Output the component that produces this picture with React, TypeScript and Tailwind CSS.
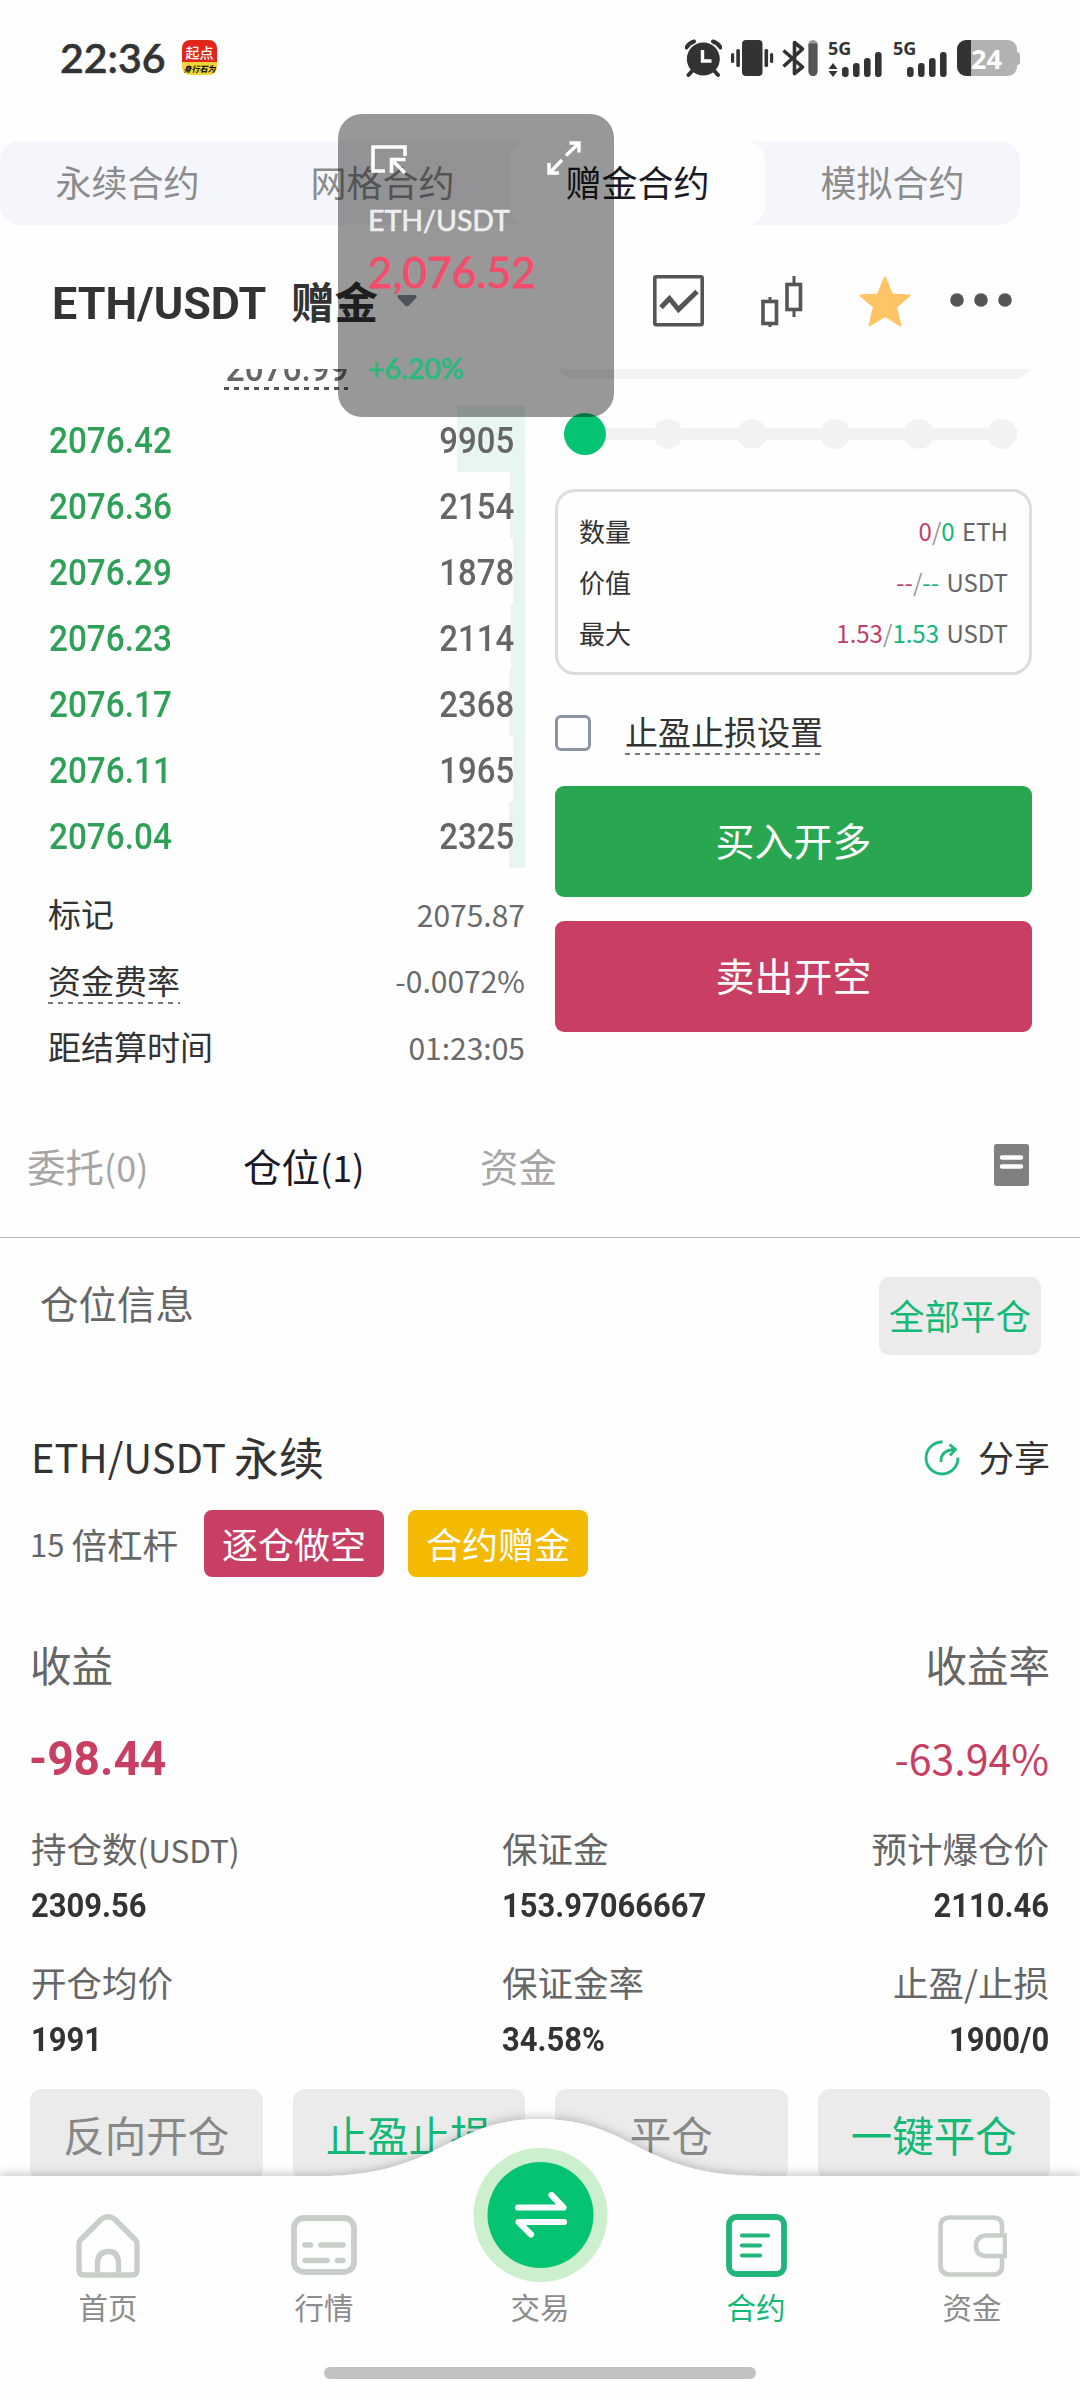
import React from 'react';

const CJK = "font-['Noto_Sans_CJK_SC',sans-serif]";
const DIN = "font-['Roboto','Noto_Sans_CJK_SC',sans-serif]";

const asks = [
  { price: '2076.42', amount: '9905', depth: 68 },
  { price: '2076.36', amount: '2154', depth: 15 },
  { price: '2076.29', amount: '1878', depth: 12 },
  { price: '2076.23', amount: '2114', depth: 14 },
  { price: '2076.17', amount: '2368', depth: 16 },
  { price: '2076.11', amount: '1965', depth: 12 },
  { price: '2076.04', amount: '2325', depth: 16 },
];

function Dashes({ color, thick, width }: { color: string; thick: number; width: number }) {
  return (
    <svg className="block" width={width} height={thick}>
      <line x1="0" y1={thick / 2} x2={width} y2={thick / 2} stroke={color} strokeWidth={thick} strokeDasharray="5 5" />
    </svg>
  );
}

function SignalBars({ data }: { data?: boolean }) {
  return (
    <svg className="overflow-visible" width="60" height="40" viewBox="0 0 60 40" fill="#333">
      <text x="0" y="17" fontSize="18" fontWeight="700" fontFamily="Noto Sans">5G</text>
      {data && <path d="M0.5 31l4.5-6 4.5 6zM0.5 33h9l-4.5 6z" />}
      <rect x="14" y="29" width="6.6" height="10" rx="3" />
      <rect x="25" y="25" width="6.6" height="14" rx="3" />
      <rect x="36" y="20" width="6.6" height="19" rx="3" />
      <rect x="47" y="14" width="6.6" height="25" rx="3" />
    </svg>
  );
}

function StatusBar() {
  return (
    <div className="flex h-[141px] items-start pl-[60px] pt-[38px]">
      <div className="w-[122px] font-['Lato'] text-[41px] font-semibold leading-[39px] text-[#333] [-webkit-text-stroke:0.5px_#333]">22:36</div>
      <div className="mt-[2px] flex h-[35px] w-[35px] flex-col overflow-hidden rounded-[8px]">
        <div className={`${CJK} flex h-[22px] items-center justify-center bg-[#e1261c] pt-px text-[14px] font-medium leading-none text-white`}>起点</div>
        <div className={`${CJK} flex h-[13px] items-center justify-center bg-[#f0d43a] text-[8px] font-bold italic leading-none text-black`}>身行石为</div>
      </div>
      <div className="ml-[468px] flex h-[40px] items-start">
        <svg width="37" height="40" viewBox="0 0 37 40">
          <circle cx="18.300" cy="21" r="16.500" fill="#333" />
          <path d="M1.500 9.500Q4 5 9 3.500M35.500 9.500Q33 5 28 3.500M7.500 32.500l-4 4.500M29 32.500l4 4.500" stroke="#333" strokeWidth="4" fill="none" strokeLinecap="round" />
          <path d="M17.500 12v11h9" stroke="#fff" strokeWidth="3.400" fill="none" />
        </svg>
        <svg className="ml-[9px]" width="43" height="40" viewBox="0 0 43 40" fill="#333">
          <rect x="11" y="2" width="20.500" height="36" rx="4" />
          <rect x="0" y="15" width="3.200" height="10" rx="1.500" />
          <rect x="5.300" y="11" width="3.600" height="18" rx="1.500" />
          <rect x="33.500" y="11" width="3.600" height="18" rx="1.500" />
          <rect x="39" y="15" width="3.200" height="10" rx="1.500" />
        </svg>
        <svg className="ml-[8px]" width="36" height="40" viewBox="0 0 36 40">
          <path d="M1.500 12.500L20.500 29 12.500 35.500V4.500L20.500 11 1.500 28.500" stroke="#333" strokeWidth="3.600" fill="none" strokeLinejoin="round" />
          <rect x="26.500" y="2" width="9" height="36" rx="4.500" fill="#9a9a9a" />
          <path d="M26.500 5.500h9V33.500a4.500 4.500 0 0 1-9 0z" fill="#555" />
        </svg>
        <div className="ml-[10px] h-[40px] w-[65px]"><SignalBars data /></div>
        <div className="h-[40px] w-[64px]"><SignalBars /></div>
        <div className="mt-[2px] flex items-center">
          <div className="flex h-[36px] w-[60px] items-center overflow-hidden rounded-[9px] bg-[linear-gradient(90deg,#333_14px,#b2b2b2_14px)] pl-[14px] font-['Noto_Sans'] text-[27px] font-bold leading-none text-white">24</div>
          <div className="h-[13px] w-[3px] rounded-r-[3px] bg-[#b2b2b2]" />
        </div>
      </div>
    </div>
  );
}

function TopTabs() {
  const tabs = ['永续合约', '网格合约', '赠金合约', '模拟合约'];
  return (
    <div className="flex h-[84px] w-[1020px] rounded-[20px] bg-[#f5f6fb]">
      {tabs.map((t, i) => (
        <div key={t} className={`flex w-[255px] items-center justify-center pb-[4px] text-[36px] leading-none ${i === 2 ? 'rounded-[20px] bg-[#fefefe] text-[#1a1a26]' : 'text-[#8c8c8c]'}`}>{t}</div>
      ))}
    </div>
  );
}

function PairHeader() {
  return (
    <div className="flex h-[144px] items-start pl-[52px]">
      <div className="flex h-[154px] w-[601px] items-center text-[#333]">
        <span className={`${DIN} w-[239px] origin-left scale-x-[1.03] whitespace-nowrap pt-[5px] text-[43.500px] font-bold leading-none`}>ETH/USDT</span>
        <span className="pb-[2px] text-[43.500px] font-bold leading-none">赠金</span>
        <svg className="ml-[19px] mt-[-3px]" width="20" height="12" viewBox="0 0 20 12"><path d="M2 0h16q2.500.5 1 3l-7 7.500q-2 1.500-4 0L1 3Q-.5.5 2 0z" fill="#808a9c" /></svg>
      </div>
      <div className="flex h-[152px] items-center">
        <svg width="51" height="52" viewBox="0 0 51 52" fill="none" stroke="#555">
          <rect x="1.800" y="1.800" width="47.400" height="48" rx="1.500" strokeWidth="3.600" />
          <path d="M8 32.500l8.500-9 9 11L44 16.500" strokeWidth="5" />
        </svg>
        <svg className="ml-[57px]" width="42" height="51" viewBox="0 0 42 51" fill="none" stroke="#555" strokeWidth="3.600">
          <path d="M9 21v4M9 48v3M33 0v8M33 34v7" strokeWidth="3" />
          <rect x="2" y="25.500" width="13.500" height="22" />
          <rect x="26" y="8.500" width="13.500" height="25" />
        </svg>
        <svg className="ml-[56px]" width="52" height="51" viewBox="0 0 52 51"><path d="M26 1.500L33 18.500 50.500 19.500 37 31 41.500 49.500 26 40 10.500 49.500 15 31 1.500 19.500 19 18.500z" fill="#ffc466" stroke="#ffc466" strokeWidth="2" strokeLinejoin="round" /></svg>
        <svg className="ml-[38px]" width="64" height="16" viewBox="0 0 64 16" fill="#555"><circle cx="8" cy="7" r="6.800" /><circle cx="32" cy="7" r="6.800" /><circle cx="56" cy="7" r="6.800" /></svg>
      </div>
    </div>
  );
}

function OrderBook() {
  return (
    <div className="w-[525px]">
      <div className="flex h-[37px] flex-col overflow-hidden pl-[224px]">
        <div className={`${DIN} mt-[-19px] h-[37px] shrink-0 origin-left scale-x-[0.9] pl-[2px] text-[37px] font-medium leading-[37px] text-[#666]`}>2076.99</div>
        <Dashes color="#555" thick={3} width={124} />
      </div>
      {asks.map((a) => (
        <div key={a.price} className="relative flex h-[66px] items-center justify-between pl-[48.500px] pr-[10.500px] pt-[3px]">
          <div className="absolute right-0 top-0 h-[66px] bg-[#e8f6f3]" style={{ width: a.depth }} />
          <span className={`${DIN} relative origin-left scale-x-[0.9] text-[37px] font-medium leading-none text-[#2ea058]`}>{a.price}</span>
          <span className={`${DIN} relative origin-right scale-x-[0.89] text-[37px] font-medium leading-none text-[#666]`}>{a.amount}</span>
        </div>
      ))}
      <div className="flex flex-col pl-[48px] pt-[12.500px]">
        {[['标记', '2075.87'], ['资金费率', '-0.0072%'], ['距结算时间', '01:23:05']].map(([k, v], i) => (
          <div key={k} className="flex h-[66.500px] items-center justify-between">
            <div className="relative text-[33px] leading-none text-[#333]">
              {k}
              {i === 1 && <div className="absolute left-0 top-[38px]"><Dashes color="#777" thick={2} width={132} /></div>}
            </div>
            <span className="text-[30px] leading-none text-[#6a6a6a]">{v}</span>
          </div>
        ))}
      </div>
    </div>
  );
}

function InfoRow({ label, a, b, unit }: { label: string; a: string; b: string; unit: string }) {
  return (
    <div className="flex h-[51px] items-center justify-between leading-none">
      <span className="text-[26px] text-[#333]">{label}</span>
      <span className="text-[24px] text-[#666]"><span className="text-[#c03f68]">{a}</span><span className="text-[#999]">/</span><span className="mr-[2px] text-[#14b877]">{b}</span> {unit}</span>
    </div>
  );
}

function TradeForm() {
  return (
    <div className="ml-[30px] w-[477px]">
      <div className="h-[10px] overflow-hidden"><div className="mt-[-60px] h-[70px] rounded-[20px] bg-[#f2f2f2]" /></div>
      <div className="mt-[34px] flex h-[42px] items-center pl-[9px]">
        <div className="flex h-[12px] w-[453px] items-center justify-between bg-[#f2f2f2]">
          <div className="-mr-[6px] h-[42px] w-[42px] shrink-0 rounded-full bg-[#04c372]" />
          {[0, 1, 2, 3, 4].map((i) => <div key={i} className="h-[30px] w-[30px] shrink-0 rounded-full bg-[#f2f2f2]" />)}
        </div>
      </div>
      <div className="mt-[34px] h-[186px] rounded-[20px] border-[3px] border-[#ddd] px-[21px] pt-[13px]">
        <InfoRow label="数量" a="0" b="0" unit="ETH" />
        <InfoRow label="价值" a="--" b="--" unit="USDT" />
        <InfoRow label="最大" a="1.53" b="1.53" unit="USDT" />
      </div>
      <div className="mt-[40px] flex h-[36px] items-center">
        <div className="h-[36px] w-[36px] rounded-[6px] border-[3px] border-[#8c93a6]" />
        <div className="relative ml-[34px] mt-[-3px] text-[33px] leading-none text-[#333]">
          止盈止损设置
          <div className="absolute left-0 top-[38px]"><Dashes color="#777" thick={2} width={196} /></div>
        </div>
      </div>
      <div className="mt-[35px] flex h-[111px] items-center justify-center rounded-[9px] bg-[#28a650] pb-[4px] text-[39px] leading-none text-white">买入开多</div>
      <div className="mt-[24px] flex h-[111px] items-center justify-center rounded-[9px] bg-[#c83f63] pb-[4px] text-[39px] leading-none text-white">卖出开空</div>
    </div>
  );
}

function SectionTabs() {
  return (
    <div className="flex h-[155px] items-center border-b border-[#b8b8b8] text-[38.500px] leading-none text-[#a6a6a6]">
      <div className="flex w-full items-center pt-[10px]">
        <div className="w-[216px] pl-[27px]">委托<span className="text-[36px]">(0)</span></div>
        <div className="w-[237px] pl-[27px] text-[#1a1a26]">仓位<span className="text-[36px]">(1)</span></div>
        <div className="flex-1 pl-[27px]">资金</div>
        <svg className="mr-[51px]" width="35" height="42" viewBox="0 0 35 42"><rect width="35" height="42" rx="2.500" fill="#808080" /><path d="M8 13.500h19M8 22.500h19" stroke="#fff" strokeWidth="4.500" strokeLinecap="round" /></svg>
      </div>
    </div>
  );
}

const stats = [
  [<>持仓数<span className="text-[31.500px]">(USDT)</span></>, '2309.56', '保证金', '153.97066667', '预计爆仓价', '2110.46'],
  ['开仓均价', '1991', '保证金率', '34.58%', '止盈/止损', '1900/0'],
];

function Position() {
  return (
    <div className="flex flex-col">
      <div className="flex justify-between pl-[40px] pr-[39px] pt-[39px]">
        <span className="pt-[4px] text-[38.500px] leading-[42px] text-[#666]">仓位信息</span>
        <div className="flex h-[78px] w-[162px] items-center justify-center rounded-[10px] bg-[#ececec] pb-[3px] text-[35.500px] leading-none text-[#14b877]">全部平仓</div>
      </div>
      <div className="px-[31px]">
        <div className="mt-[71px] flex h-[60px] items-center justify-between text-[#333]">
          <span className="flex items-center text-[45px] leading-none"><span className="mr-[8px] text-[40px]">ETH/USDT</span>永续</span>
          <span className="mr-[-1px] flex items-center text-[36px] leading-none">
            <svg className="mr-[18px] mt-[3px]" width="36" height="36" viewBox="0 0 36 36" fill="none" stroke="#1fb97c" strokeWidth="2.800">
              <path d="M18.500 2A16 16 0 1 0 34 17.500" />
              <path d="M17 22q-.5-12 14-12.500M25.500 4.500l6 5-5.500 6" />
            </svg>
            分享
          </span>
        </div>
        <div className="mt-[24px] flex h-[67px] items-center text-[35.500px] leading-none text-[#666]">
          <span className="ml-[-1px] mr-[7px] text-[31px]">15</span>
          <span className="w-[132.500px]">倍杠杆</span>
          <span className="flex h-[67px] w-[180px] items-center justify-center rounded-[8px] bg-[#c83f63] pb-[2px] text-[36px] text-white">逐仓做空</span>
          <span className="ml-[24px] flex h-[67px] w-[180px] items-center justify-center rounded-[8px] bg-[#f3b903] pb-[2px] text-[36px] text-white">合约赠金</span>
        </div>
        <div className="mx-[-1px] mt-[58px] flex h-[60px] items-center justify-between text-[41.500px] leading-none text-[#666]"><span>收益</span><span>收益率</span></div>
        <div className="mt-[33px] flex h-[60px] items-center justify-between text-[#c83f63]">
          <span className={`${DIN} ml-[-2px] origin-left scale-x-[0.96] pt-[2px] text-[48px] font-bold leading-none`}>-98.44</span>
          <span className="pb-[2px] text-[41px] leading-none">-63.94%</span>
        </div>
        {stats.map((r, i) => (
          <div key={i} className="mt-[27px] flex h-[107px]">
            {[0, 1, 2].map((c) => (
              <div key={c} className={`flex flex-col ${c === 0 ? 'w-[471px] items-start' : c === 1 ? 'flex-1 items-start' : 'w-[250px] items-end'}`}>
                <span className="h-[74px] whitespace-nowrap pt-[9px] text-[35.500px] leading-[48px] text-[#666]">{r[c * 2]}</span>
                <span className={`${DIN} h-[33px] scale-x-[0.91] text-[34px] font-bold leading-[33px] text-[#333] ${c === 2 ? 'origin-right' : 'origin-left'}`}>{r[c * 2 + 1]}</span>
              </div>
            ))}
          </div>
        ))}
        <div className="ml-[-1px] mt-[33px] flex w-[1020px] justify-between text-[41.500px] leading-none">
          {['反向开仓', '止盈止损', '平仓', '一键平仓'].map((t, i) => (
            <div key={t} className={`flex h-[92px] w-[232.500px] items-center justify-center rounded-[12px] bg-[#ebebeb] ${i % 2 ? 'text-[#14b877]' : 'text-[#888]'}`}>{t}</div>
          ))}
        </div>
      </div>
    </div>
  );
}

function BottomNav() {
  const icons = [
    <svg key="h" width="64" height="64" viewBox="0 0 64 64" fill="none" stroke="#c8cec8" strokeWidth="5.400">
      <path d="M3 29.500Q3 27.500 4.500 26L25 5.500Q32 0 39 5.500L59.500 26Q61 27.500 61 29.500V56q0 5-5 5H8q-5 0-5-5z" /><path d="M21.500 61V48q1-10 10.500-10.500T42.500 48v13" />
    </svg>,
    <svg key="q" width="66" height="64" viewBox="0 0 66 64" fill="none" stroke="#c8cec8" strokeWidth="5.800">
      <rect x="3" y="4" width="60" height="54" rx="10" /><path d="M14 31h5.500M30 31h22M14 46.500h22M46.500 46.500h5.500" strokeLinecap="round" strokeWidth="5.600" />
    </svg>,
    null,
    <svg key="c" width="61" height="64" viewBox="0 0 61 64" fill="none" stroke="#22b57a" strokeWidth="5.800">
      <rect x="3" y="3" width="55" height="57" rx="7.500" /><path d="M16 21.500h26M16 31.500h18M16 41.500h18" strokeLinecap="round" strokeWidth="4.200" />
    </svg>,
    <svg key="w" width="69" height="64" viewBox="0 0 69 64" fill="none" stroke="#c8cec8" strokeWidth="4.600">
      <path d="M64 22V12Q64 3.500 55 3.500H12Q2.500 3.500 2.500 13V51Q2.500 60.500 12 60.500H55Q64 60.500 64 52V42" /><path d="M67 21.500H48Q38 22.500 38 32T48 42H67z" />
    </svg>,
  ];
  const labels = ['首页', '行情', '交易', '合约', '资金'];
  return (
    <div className="absolute bottom-0 left-0 h-[300px] w-[1080px]">
      <svg className="absolute left-0 top-0" width="1080" height="300" viewBox="0 0 1080 300">
        <defs><filter id="navShadow" x="-5%" y="-15%" width="110%" height="130%"><feDropShadow dx="0" dy="-2" stdDeviation="5" floodColor="#000" floodOpacity="0.22" /></filter></defs>
        <path d="M0 76H320C440 76 448 19 540 19S640 76 760 76H1080V310H0z" fill="#fefefe" filter="url(#navShadow)" />
        <circle cx="540.500" cy="115" r="67" fill="#ccf0cd" />
        <circle cx="540.500" cy="115" r="53" fill="#04c372" />
        <path d="M518 107.500H563.500L551.500 95M564 122H518.500L531 134.500" stroke="#fff" strokeWidth="6.200" fill="none" strokeLinecap="round" strokeLinejoin="round" />
      </svg>
      <div className="relative flex pt-[114px]">
        {labels.map((l, i) => (
          <div key={l} className={`flex w-[216px] flex-col items-center text-[29.500px] leading-none ${i === 3 ? 'text-[#14b877]' : 'text-[#8c8c8c]'}`}>
            <div className="h-[78px]">{icons[i]}</div>
            {l}
          </div>
        ))}
      </div>
      <div className="relative mx-auto mt-[45px] h-[12px] w-[432px] rounded-full bg-[#c1c1c1]" />
    </div>
  );
}

function FloatingTicker() {
  return (
    <div className="absolute left-[338px] top-[114px] flex h-[303px] w-[276px] flex-col rounded-[24px] bg-black/40 pl-[30px] font-['Lato']">
      <div className="flex h-[87px] items-start justify-between pr-[33px] pt-[27px]">
        <svg className="ml-[3px] mt-[4px]" width="36" height="30" viewBox="0 0 36 30" fill="none" stroke="#fff" strokeWidth="3.600">
          <path d="M34 11V2H2v24h12M34.500 14.500H20.500V28M21.500 15.500L34 28" />
        </svg>
        <svg width="34" height="34" viewBox="0 0 34 34" fill="none" stroke="#fff" strokeWidth="3.400">
          <path d="M19 14.500L31 3M22.500 2H32v9.500M15 19L3 31.500M2 22v10h10" />
        </svg>
      </div>
      <div className="h-[40px] text-[28.500px] leading-[38px] text-[#eee] [-webkit-text-stroke:0.6px_#eee]">ETH/USDT</div>
      <div className="mt-[11px] h-[40px] text-[42px] leading-[40px] tracking-[0.3px] text-[#f24e6c] [-webkit-text-stroke:1px_#f24e6c]">2,076.52</div>
      <div className="mt-[16px] h-[40px] text-[28px] leading-[40px] tracking-[1.500px] text-[#8f97a8]/25">≈2,076.52</div>
      <div className="h-[40px] text-[28.500px] font-semibold leading-[40px] text-[#2cb97e] [-webkit-text-stroke:0.5px_#2cb97e]">+6.20%</div>
    </div>
  );
}

export default function App() {
  return (
    <div className={`${CJK} relative h-[2400px] w-[1080px] overflow-hidden bg-[#fefefe]`} lang="zh-CN">
      <StatusBar />
      <TopTabs />
      <PairHeader />
      <div className="flex h-[714px]">
        <OrderBook />
        <TradeForm />
      </div>
      <SectionTabs />
      <Position />
      <BottomNav />
      <FloatingTicker />
    </div>
  );
}
